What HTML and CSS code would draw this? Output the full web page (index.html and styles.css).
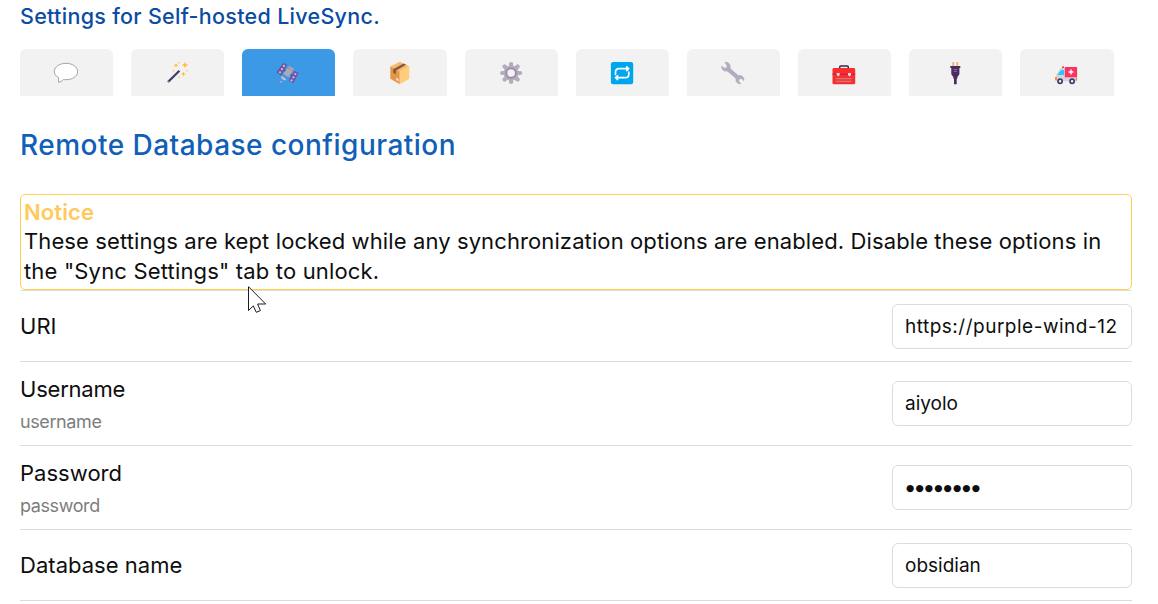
FILE: index.html
```html
<!DOCTYPE html>
<html lang="en">
<head>
<meta charset="utf-8">
<title>Self-hosted LiveSync</title>
<link rel="stylesheet" href="styles.css">
</head>
<body>
<main class="settings">
  <h2 class="title"><span>Settings for Self-hosted LiveSync.</span></h2>
  <nav class="tabs">
    <div class="tab"><svg class="icon" viewBox="0 0 27 27"><path d="M5.700 23.400 5.500 18.600C2.800 17 1.300 15 1.300 12.600 1.300 7.800 6.600 4.300 13 4.300S24.600 7.800 24.600 12.600 19.400 20.700 13 20.700Q11.600 20.700 10.500 20.500 8.500 22.700 5.700 23.400Z" fill="#fff" stroke="#a2a2a2" stroke-width="1"/></svg></div>
    <div class="tab"><svg class="icon" viewBox="0 0 27 27"><path d="M4 23 15.400 11.700" stroke="#433b6b" stroke-width="2.300"/><path d="m4 23 .8-.8" stroke="#998eaa" stroke-width="2"/><g fill="#ffc130"><path d="m21 2.800 .9 2.300 2.300.9-2.300.9-.9 2.300-.9-2.300-2.300-.9 2.300-.9ZM12 4l.7 1.600 1.700.7-1.700.7-.7 1.700-.7-1.700-1.700-.7 1.700-.7ZM19.400 12.600l.7 1.700 1.700.7-1.700.7-.7 1.700-.7-1.700L17 15l1.700-.7Z"/><circle cx="15" cy="3.700" r=".8"/><circle cx="9.400" cy="12" r=".8"/><circle cx="23" cy="11.700" r=".8"/><circle cx="15" cy="18.300" r=".8"/></g></svg></div>
    <div class="tab tab-active"><svg class="icon" viewBox="0 0 27 27"><path d="m9 11 10 7" stroke="#39536f" stroke-width="1.500"/><path d="m8.200 3.700 4 2.300-6 10.700-4.700-3.400ZM19.500 11.700l4.300 2.300-5.600 10.300-4.700-3Z" fill="#6b579d"/><g fill="#cfb0f5"><circle cx="8.900" cy="7" r="1.150"/><circle cx="7" cy="10.200" r="1.150"/><circle cx="5" cy="13.300" r="1.150"/><circle cx="20.400" cy="15.100" r="1.150"/><circle cx="18.500" cy="18.300" r="1.150"/><circle cx="16.600" cy="21.400" r="1.150"/></g><path d="m14.200 6.700 5 3.300-5.700 8.300-5.300-3.600Z" fill="#b0a6b6"/><path d="m13 8.700 5.300 3.500" stroke="#8d8499" stroke-width=".8"/><path d="M5.700 17.300q3-.8 5.700 3.700-4.200 1.200-5.700-3.700Z" fill="#c5bcc9"/><circle cx="6" cy="22.700" r="1" fill="#b5abc0"/></svg></div>
    <div class="tab"><svg class="icon" viewBox="0 0 27 27"><path d="m12.800 2.700 9.500 4.800-9.500 5-9.500-5Z" fill="#f5bb66"/><path d="m3.300 7.500 9.500 5v12.800l-9.500-5.500Z" fill="#e49744"/><path d="m22.300 7.500-9.500 5v12.800l9.500-5.500Z" fill="#ffcd7c"/><path d="m16.600 4.500 2.500 1.300-10.300 6v3.400l-2.700-1.500V10.300Z" fill="#8c5543"/><path d="m9.200 18.800 2.400 1.300v2.300l-2.400-1.300Z" fill="#eee3da"/></svg></div>
    <div class="tab"><svg class="icon" viewBox="0 0 27 27"><g stroke="#b4acbc" stroke-width="4.200" stroke-linecap="round"><path d="M13.100 5v18M4.100 14h18M6.600 7.500l13 13M19.600 7.500l-13 13"/></g><circle cx="13.100" cy="14" r="7.500" fill="#b4acbc"/><circle cx="13.100" cy="14" r="4.700" fill="#f3f3f3" stroke="#968aa5" stroke-width="1.700"/></svg></div>
    <div class="tab"><svg class="icon" viewBox="0 0 27 27"><rect x="1.900" y="3" width="22.300" height="22.300" rx="2.200" fill="#00a6ed"/><g fill="none" stroke="#fff" stroke-width="1.700" stroke-linejoin="round" stroke-linecap="round"><path d="M6.500 15.400v-2.200q0-3.500 3.500-3.500h9.400M17.700 7.900l2 1.800-2 1.800M19.800 13.200v2q0 3.500-3.500 3.500H6.800M8.600 16.900l-2 1.800 2 1.800"/></g></svg></div>
    <div class="tab"><svg class="icon" viewBox="0 0 27 27"><path d="m8.300 10.300 9.400 8.200" stroke="#b4acbc" stroke-width="4.200"/><path d="M4.700 3.200q3.300-.6 5.100 2.200 1.100 2.200.1 4.700l-2.500 2q-3.400.7-5-1.600-1-1.600-.9-3.500l3.100 2.200 1.900-.5.500-1.900ZM20.900 25q-3.300.2-4.800-2.500-.8-2.200.2-4.500l2.400-1.600q3.100-.5 4.700 2 .8 1.500.6 3.300l-2.800-2.100-1.900.4-.7 1.900Z" fill="#b4acbc" stroke="#b4acbc" stroke-width=".5"/></svg></div>
    <div class="tab"><svg class="icon" viewBox="0 0 27 27"><path d="M8.700 9.500V7.900q0-1 1-1h6.600q1 0 1 1v1.600" fill="none" stroke="#3b2949" stroke-width="1.500"/><rect x="1.500" y="9" width="22.700" height="16.300" rx="1.400" fill="#f92f2f"/><path d="M1.500 15.200h22.700" stroke="#cb1640" stroke-width="1"/><path d="M5.700 14h3v2l-1.500 1.600L5.700 16ZM17 14h3v2l-1.500 1.600L17 16Z" fill="#e3dce2"/><path d="M4.800 19.700h15.700M4.800 22.300h15.700" stroke="#ca8c90" stroke-width="1"/></svg></div>
    <div class="tab"><svg class="icon" viewBox="0 0 27 27"><path d="M10.300 3h1.900v4.500h-1.900ZM14.400 3h1.900v4.500h-1.900Z" fill="#f2b470"/><path d="M8.300 7h10v1.900h-.9v6.300l-2.100 3.100v1.500h-.6v5.500h-2.700v-5.500h-.6v-1.500l-2.100-3.100V8.900h-1Z" fill="#4b2b62"/><path d="M11.300 10.500h4.100M11.700 12.500h3.300" stroke="#8566a4" stroke-width="1"/></svg></div>
    <div class="tab"><svg class="icon" viewBox="0 0 27 27"><path d="M3 18.500 3.300 16l4.300-7.100h4.600v9h11.900v4.400H2.700Z" fill="#d8d3da"/><path d="M11.800 8h12.300v10.300H11.800Z" fill="#fb3360"/><path d="M18 10.500v5M15.500 13h5" stroke="#fff" stroke-width="1.400"/><path d="M4.300 16 8 11h3v5Z" fill="#26c9fc"/><path d="M9 7.600h2v1.300H9Z" fill="#f8312f"/><path d="M2.100 18h1.700v3.300H2.100ZM22.800 19h1.300v2.500h-1.300Z" fill="#ff822d"/><g fill="#f4f4f4" stroke="#433b6b" stroke-width="1.700"><circle cx="7.100" cy="22.300" r="2.100"/><circle cx="19.100" cy="22.300" r="2.100"/></g></svg></div>
  </nav>
  <h3 class="heading"><span>Remote Database configuration</span></h3>
  <section class="notice">
    <div class="notice-title"><span>Notice</span></div>
    <div class="notice-text"><span>These settings are kept locked while any synchronization options are enabled. Disable these options in</span><br><span class="line-two">the "Sync Settings" tab to unlock.</span></div>
  </section>
  <div class="row">
    <div class="info"><div class="name">URI</div></div>
    <input class="field field-uri" type="text" value="https://purple-wind-12">
  </div>
  <div class="row row-tall">
    <div class="info"><div class="name name-tight">Username</div><div class="desc">username</div></div>
    <input class="field" type="text" value="aiyolo">
  </div>
  <div class="row row-tall">
    <div class="info"><div class="name">Password</div><div class="desc">password</div></div>
    <input class="field field-password" type="text" value="●●●●●●●●">
  </div>
  <div class="row">
    <div class="info"><div class="name">Database name</div></div>
    <input class="field" type="text" value="obsidian">
  </div>
  <div class="row row-end"></div>
</main>
<svg class="cursor" viewBox="0 0 20 27"><path d="M.5.700V24.500L5.300 19.900 8.300 26.300 12.400 24.600 9.600 18H17.700Z" fill="#fff" stroke="#1c1c24" stroke-width="1"/></svg>
</body>
</html>
```
FILE: styles.css
```css
* { box-sizing: border-box; }
body {
  margin: 0;
  height: 604px;
  overflow: hidden;
  background: #fff;
  color: #0e0e0e;
  font-family: Inter, "Liberation Sans", sans-serif;
  font-weight: 400;
}
.settings { width: 1132px; padding-left: 20px; }
.title {
  height: 49px;
  margin: 0;
  padding-top: 1px;
  color: #0a4ca3;
  font-size: 21.5px;
  font-weight: 500;
  letter-spacing: .29px;
  line-height: 30px;
}
.tabs { display: flex; gap: 18px; width: 1093.6px; height: 47px; }
.tab {
  flex: 1;
  display: flex;
  align-items: center;
  justify-content: center;
  border-radius: 6px 6px 0 0;
  background: #f2f2f2;
}
.tab-active { background: #3c99e6; }
.icon { display: block; width: 27px; height: 27px; }
.heading {
  height: 98px;
  margin: 0;
  padding-top: 29px;
  color: #1160b8;
  font-size: 28px;
  font-weight: 500;
  letter-spacing: .48px;
  line-height: 40px;
}
.notice {
  height: 96px;
  padding: 3px;
  border: 1px solid #ffcf50;
  border-radius: 5px;
  font-size: 22px;
  letter-spacing: .107px;
  line-height: 30px;
  white-space: nowrap;
}
.notice-title { height: 28px; line-height: 28px; color: #ffca5c; font-weight: 600; letter-spacing: .1px; }
.line-two { letter-spacing: .17px; }
.row {
  display: flex;
  align-items: center;
  justify-content: space-between;
  height: 71px;
  border-top: 1px solid #dcdcdc;
}
.row-tall { height: 84px; }
.row-tall .info { padding-top: 1px; }
.row-end { height: 1px; }
.name { font-size: 22px; letter-spacing: .03px; line-height: 30px; }
.name-tight { letter-spacing: -.22px; }
.desc { margin-top: 5px; color: #7d7d7d; font-size: 18px; letter-spacing: -.4px; line-height: 26px; }
.field {
  width: 240px;
  height: 45px;
  padding: 0 12px;
  border: 1px solid #dcdcdc;
  border-radius: 6px;
  background: #fff;
  color: #0e0e0e;
  font: inherit;
  font-size: 19px;
}
.field-uri { letter-spacing: .5px; }
.field-password { padding-left: 13px; font-family: "DejaVu Sans", sans-serif; font-size: 9.5px; letter-spacing: 1.1px; }
.cursor { position: absolute; left: 248px; top: 286px; width: 20px; height: 27px; }
```
